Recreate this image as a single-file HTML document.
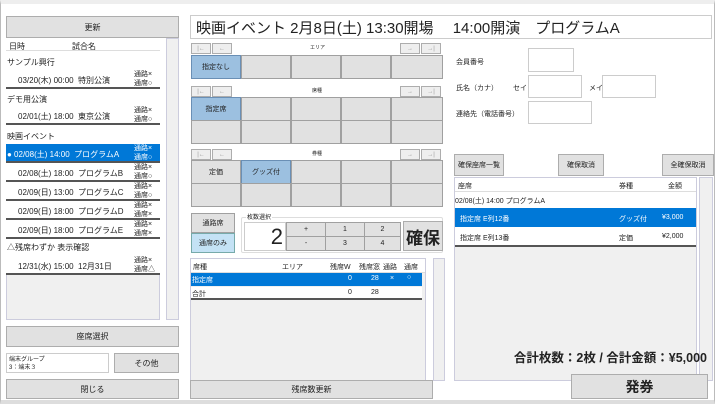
<!DOCTYPE html><html><head><meta charset="utf-8"><style>
*{box-sizing:border-box;margin:0;padding:0}
body{width:715px;height:404px;overflow:hidden;background:#fff;font-family:"Liberation Sans","Noto Sans CJK JP",sans-serif;color:#222;position:relative}
.a{position:absolute}
.btn{position:absolute;background:#e1e1e1;border:1px solid #adadad;display:flex;align-items:center;justify-content:center;font-size:8px;color:#222}
.sel{background:#0078d7;color:#fff}
.cell{position:absolute;background:#e1e1e1;border:1px solid #a0a0a0;display:flex;align-items:center;justify-content:center;font-size:7px}
.blue{background:#9cc0e0;border-color:#6a8fb5}
.t{position:absolute;font-size:8px;white-space:nowrap}
.row{position:absolute;left:6px;width:154px;height:19px;background:#fff;border-bottom:2px solid #555;font-size:8px}
.row.sel{background:#0078d7;color:#fff}
.row .d{position:absolute;left:12px;top:5px}
.row .s{position:absolute;left:128px;top:0;font-size:7px;line-height:9px}
.inp{position:absolute;border:1px solid #ccc;background:#fff}
.sb{position:absolute;background:#f0f0f0;border:1px solid #ccd}
</style></head><body>
<div class="a" style="left:0;top:0;width:715px;height:404px;border:1px solid #bbb;border-top:4px solid #eee;border-bottom:4px solid #ddd"></div>
<!-- left -->
<div class="btn" style="left:6px;top:16px;width:173px;height:22px">更新</div>
<div class="a" style="left:6px;top:38px;width:154px;height:282px;background:#f0f0f0;border:1px solid #ccd"></div>
<div class="a" style="left:6px;top:38px;width:154px;height:13px;background:#fff;border-bottom:1px solid #ddd"></div>
<div class="t" style="left:9px;top:41px">日時</div><div class="t" style="left:72px;top:41px">試合名</div>
<div class="a" style="left:6px;top:51px;width:154px;height:220px;background:#fff"></div>
<div class="t" style="left:7px;top:57px">サンプル興行</div>
<div class="row" style="top:70px"><span class="d">03/20(木) 00:00&nbsp; 特別公演</span><span class="s">通路×<br>通席○</span></div>
<div class="t" style="left:7px;top:94px">デモ用公演</div>
<div class="row" style="top:106px"><span class="d">02/01(土) 18:00&nbsp; 東京公演</span><span class="s">通路×<br>通席○</span></div>
<div class="t" style="left:7px;top:131px">映画イベント</div>
<div class="row sel" style="top:144px"><span class="d" style="left:1px">● 02/08(土) 14:00&nbsp; プログラムA</span><span class="s">通路×<br>通席○</span></div>
<div class="row" style="top:163px"><span class="d">02/08(土) 18:00&nbsp; プログラムB</span><span class="s">通路×<br>通席○</span></div>
<div class="row" style="top:182px"><span class="d">02/09(日) 13:00&nbsp; プログラムC</span><span class="s">通路×<br>通席○</span></div>
<div class="row" style="top:201px"><span class="d">02/09(日) 18:00&nbsp; プログラムD</span><span class="s">通路×<br>通席×</span></div>
<div class="row" style="top:220px"><span class="d">02/09(日) 18:00&nbsp; プログラムE</span><span class="s">通路×<br>通席×</span></div>
<div class="t" style="left:7px;top:242px">△残席わずか 表示確認</div>
<div class="row" style="top:256px"><span class="d">12/31(水) 15:00&nbsp; 12月31日</span><span class="s">通路×<br>通席△</span></div>
<div class="sb" style="left:166px;top:38px;width:13px;height:282px"></div>
<div class="btn" style="left:6px;top:326px;width:173px;height:21px">座席選択</div>
<div class="a" style="left:6px;top:353px;width:103px;height:20px;border:1px solid #ccc;font-size:6px;line-height:8px;padding:2px">端末グループ<br>3：端末３</div>
<div class="btn" style="left:114px;top:353px;width:65px;height:20px">その他</div>
<div class="btn" style="left:6px;top:379px;width:173px;height:20px">閉じる</div>
<!-- middle -->
<div class="a" style="left:190px;top:15px;width:522px;height:24px;border:1px solid #ccc;font-size:15px;padding:1px 5px;white-space:nowrap;overflow:hidden">映画イベント 2月8日(土) 13:30開場　 14:00開演　プログラムA</div>
<div class="btn" style="left:191px;top:43px;width:20px;height:11px;background:#eee;color:#999;font-size:6px">|←</div><div class="btn" style="left:212px;top:43px;width:20px;height:11px;background:#eee;color:#999;font-size:6px">←</div>
<div class="t" style="left:310px;top:44px;font-size:5px">エリア</div>
<div class="btn" style="left:400px;top:43px;width:20px;height:11px;background:#eee;color:#999;font-size:6px">→</div><div class="btn" style="left:421px;top:43px;width:20px;height:11px;background:#eee;color:#999;font-size:6px">→|</div>
<div class="cell blue" style="left:191px;top:55px;width:50px;height:24px">指定なし</div><div class="cell" style="left:241px;top:55px;width:50px;height:24px"></div><div class="cell" style="left:291px;top:55px;width:50px;height:24px"></div><div class="cell" style="left:341px;top:55px;width:50px;height:24px"></div><div class="cell" style="left:391px;top:55px;width:52px;height:24px"></div>
<div class="btn" style="left:191px;top:86px;width:20px;height:11px;background:#eee;color:#999;font-size:6px">|←</div><div class="btn" style="left:212px;top:86px;width:20px;height:11px;background:#eee;color:#999;font-size:6px">←</div>
<div class="t" style="left:312px;top:87px;font-size:5px">席種</div>
<div class="btn" style="left:400px;top:86px;width:20px;height:11px;background:#eee;color:#999;font-size:6px">→</div><div class="btn" style="left:421px;top:86px;width:20px;height:11px;background:#eee;color:#999;font-size:6px">→|</div>
<div class="cell blue" style="left:191px;top:97px;width:50px;height:24px">指定席</div><div class="cell" style="left:241px;top:97px;width:50px;height:24px"></div><div class="cell" style="left:291px;top:97px;width:50px;height:24px"></div><div class="cell" style="left:341px;top:97px;width:50px;height:24px"></div><div class="cell" style="left:391px;top:97px;width:52px;height:24px"></div>
<div class="cell" style="left:191px;top:120px;width:50px;height:24px"></div><div class="cell" style="left:241px;top:120px;width:50px;height:24px"></div><div class="cell" style="left:291px;top:120px;width:50px;height:24px"></div><div class="cell" style="left:341px;top:120px;width:50px;height:24px"></div><div class="cell" style="left:391px;top:120px;width:52px;height:24px"></div>
<div class="btn" style="left:191px;top:149px;width:20px;height:11px;background:#eee;color:#999;font-size:6px">|←</div><div class="btn" style="left:212px;top:149px;width:20px;height:11px;background:#eee;color:#999;font-size:6px">←</div>
<div class="t" style="left:312px;top:150px;font-size:5px">券種</div>
<div class="btn" style="left:400px;top:149px;width:20px;height:11px;background:#eee;color:#999;font-size:6px">→</div><div class="btn" style="left:421px;top:149px;width:20px;height:11px;background:#eee;color:#999;font-size:6px">→|</div>
<div class="cell" style="left:191px;top:160px;width:50px;height:24px">定価</div><div class="cell blue" style="left:241px;top:160px;width:50px;height:24px">グッズ付</div><div class="cell" style="left:291px;top:160px;width:50px;height:24px"></div><div class="cell" style="left:341px;top:160px;width:50px;height:24px"></div><div class="cell" style="left:391px;top:160px;width:52px;height:24px"></div>
<div class="cell" style="left:191px;top:183px;width:50px;height:24px"></div><div class="cell" style="left:241px;top:183px;width:50px;height:24px"></div><div class="cell" style="left:291px;top:183px;width:50px;height:24px"></div><div class="cell" style="left:341px;top:183px;width:50px;height:24px"></div><div class="cell" style="left:391px;top:183px;width:52px;height:24px"></div>
<div class="cell" style="left:191px;top:213px;width:44px;height:20px">通路席</div>
<div class="cell" style="left:191px;top:233px;width:44px;height:20px;background:#c4e2f5;border-color:#7aa">通席のみ</div>
<div class="a" style="left:241px;top:217px;width:202px;height:36px;border:1px solid #ddd;border-radius:2px"></div>
<div class="t" style="left:246px;top:212px;font-size:6px;background:#fff;padding:0 1px">枚数選択</div>
<div class="a" style="left:244px;top:222px;width:42px;height:29px;background:#fff;border:1px solid #ccc;font-size:22px;text-align:right;padding-right:2px;line-height:28px">2</div>
<div class="cell" style="left:286px;top:222px;width:40px;height:15px">+</div><div class="cell" style="left:325px;top:222px;width:40px;height:15px">1</div><div class="cell" style="left:364px;top:222px;width:37px;height:15px">2</div>
<div class="cell" style="left:286px;top:236px;width:40px;height:15px">-</div><div class="cell" style="left:325px;top:236px;width:40px;height:15px">3</div><div class="cell" style="left:364px;top:236px;width:37px;height:15px">4</div>
<div class="btn" style="left:403px;top:221px;width:40px;height:30px;font-size:17px;font-weight:bold">確保</div>
<div class="a" style="left:190px;top:258px;width:236px;height:123px;background:#f0f0f0;border:1px solid #ccd"></div>
<div class="a" style="left:191px;top:259px;width:234px;height:14px;background:#fff;border-bottom:1px solid #ddd;font-size:7px"><span class="a" style="left:2px;top:3px">席種</span><span class="a" style="left:91px;top:3px">エリア</span><span class="a" style="left:139px;top:3px">残席W</span><span class="a" style="left:168px;top:3px">残席窓</span><span class="a" style="left:192px;top:3px">通路</span><span class="a" style="left:213px;top:3px">通席</span></div>
<div class="a sel" style="left:191px;top:273px;width:231px;height:13px;font-size:7px"><span class="a" style="left:1px;top:2px">指定席</span><span class="a" style="left:157px;top:2px">0</span><span class="a" style="left:180px;top:2px">28</span><span class="a" style="left:199px;top:2px">×</span><span class="a" style="left:216px;top:1px">○</span></div>
<div class="a" style="left:191px;top:287px;width:231px;height:13px;font-size:7px;background:#fff;border-bottom:2px solid #555"><span class="a" style="left:1px;top:2px">合計</span><span class="a" style="left:157px;top:2px">0</span><span class="a" style="left:180px;top:2px">28</span></div>
<div class="sb" style="left:433px;top:258px;width:12px;height:123px"></div>
<div class="btn" style="left:190px;top:380px;width:243px;height:19px">残席数更新</div>
<!-- right -->
<div class="t" style="left:456px;top:57px;font-size:7px">会員番号</div><div class="inp" style="left:528px;top:48px;width:46px;height:24px"></div>
<div class="t" style="left:456px;top:83px;font-size:7px">氏名（カナ）</div><div class="t" style="left:513px;top:83px;font-size:7px">セイ</div><div class="inp" style="left:528px;top:75px;width:54px;height:23px"></div>
<div class="t" style="left:589px;top:83px;font-size:7px">メイ</div><div class="inp" style="left:602px;top:75px;width:54px;height:23px"></div>
<div class="t" style="left:456px;top:109px;font-size:7px">連絡先（電話番号）</div><div class="inp" style="left:528px;top:101px;width:64px;height:23px"></div>
<div class="btn" style="left:454px;top:154px;width:50px;height:22px;font-size:7px">確保座席一覧</div>
<div class="btn" style="left:558px;top:154px;width:46px;height:22px;font-size:7px">確保取消</div>
<div class="btn" style="left:662px;top:154px;width:52px;height:22px;font-size:7px">全確保取消</div>
<div class="a" style="left:454px;top:177px;width:243px;height:204px;background:#f0f0f0;border:1px solid #ccd"></div>
<div class="a" style="left:455px;top:178px;width:241px;height:14px;background:#fff;border-bottom:1px solid #ddd;font-size:7px"><span class="a" style="left:3px;top:3px">座席</span><span class="a" style="left:164px;top:3px">券種</span><span class="a" style="left:213px;top:3px">金額</span></div>
<div class="a" style="left:455px;top:192px;width:241px;height:55px;background:#fff"></div>
<div class="t" style="left:455px;top:196px;font-size:7px">02/08(土) 14:00 プログラムA</div>
<div class="a sel" style="left:455px;top:208px;width:241px;height:19px;font-size:7px"><span class="a" style="left:5px;top:6px">指定席 E列12番</span><span class="a" style="left:164px;top:6px">グッズ付</span><span class="a" style="left:207px;top:6px">¥3,000</span></div>
<div class="a" style="left:455px;top:227px;width:241px;height:20px;font-size:7px;border-bottom:2px solid #555"><span class="a" style="left:5px;top:6px">指定席 E列13番</span><span class="a" style="left:164px;top:6px">定価</span><span class="a" style="left:207px;top:6px">¥2,000</span></div>
<div class="sb" style="left:699px;top:177px;width:14px;height:204px"></div>
<div class="t" style="right:8px;top:347px;font-size:12.5px;font-weight:bold">合計枚数：2枚 / 合計金額：¥5,000</div>
<div class="btn" style="left:571px;top:374px;width:137px;height:25px;font-size:14px;font-weight:bold">発券</div>
</body></html>
